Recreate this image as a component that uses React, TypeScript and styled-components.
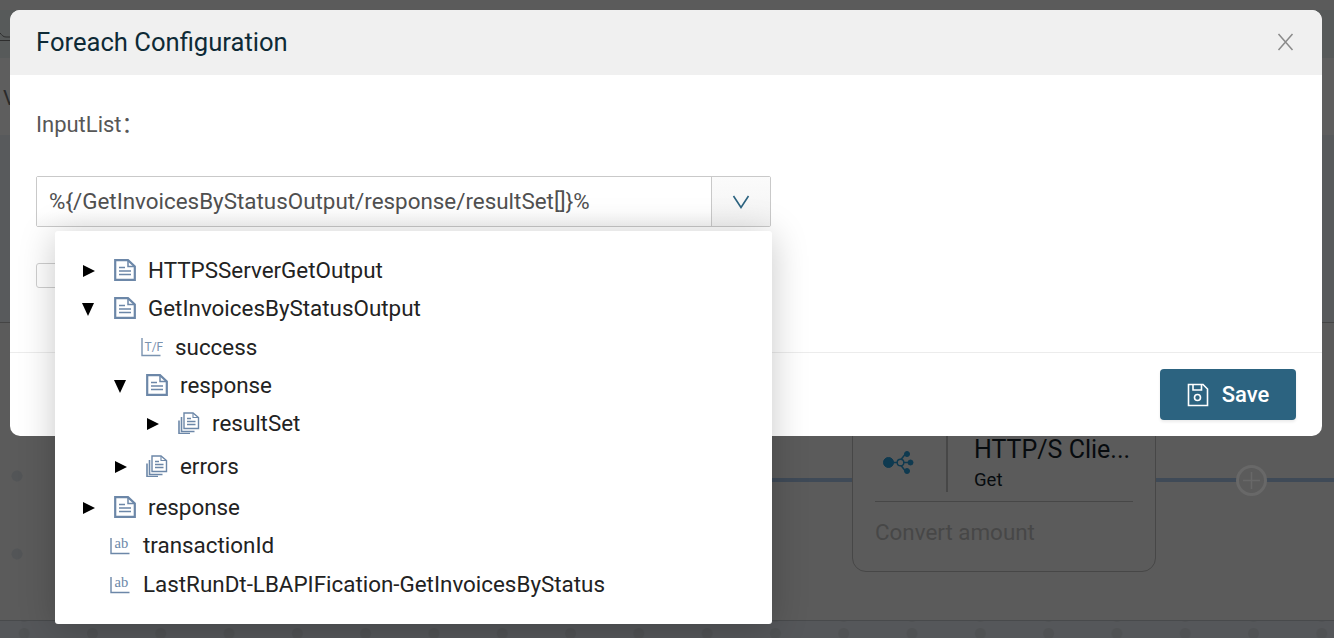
import React from 'react'
import styled, { createGlobalStyle } from 'styled-components'

const GlobalStyle = createGlobalStyle`
  html, body { margin: 0; padding: 0; background: #5b5b5b; }
  body { font-family: Roboto, "Liberation Sans", sans-serif; }
  * { box-sizing: border-box; }
`

type NodeKind = 'doc' | 'docs' | 'bool' | 'text'

interface TreeItem {
  label: string
  level: number
  kind: NodeKind
  arrow?: 'right' | 'down'
  gap?: number
}

const TREE: TreeItem[] = [
  { label: 'HTTPSServerGetOutput', level: 0, kind: 'doc', arrow: 'right' },
  { label: 'GetInvoicesByStatusOutput', level: 0, kind: 'doc', arrow: 'down' },
  { label: 'success', level: 1, kind: 'bool' },
  { label: 'response', level: 1, kind: 'doc', arrow: 'down' },
  { label: 'resultSet', level: 2, kind: 'docs', arrow: 'right' },
  { label: 'errors', level: 1, kind: 'docs', arrow: 'right', gap: 4 },
  { label: 'response', level: 0, kind: 'doc', arrow: 'right', gap: 3 },
  { label: 'transactionId', level: 0, kind: 'text' },
  { label: 'LastRunDt-LBAPIFication-GetInvoicesByStatus', level: 0, kind: 'text' },
]

const Page = styled.div`
  position: relative;
  width: 1334px;
  height: 638px;
  overflow: hidden;
  display: flex;
  flex-direction: column;
  background: #5b5b5b;
`

const TopBand = styled.div`
  position: relative;
  height: 58px;
  padding-top: 25px;
  background: linear-gradient(#5b5b5b 10px, #575a5a 10px);
  &::after {
    content: '';
    position: absolute;
    left: 0;
    top: 40px;
    width: 12px;
    border-top: 1px solid #2e2e2e;
  }
`

const SubBand = styled.div`
  height: 77px;
  padding-left: 3px;
  background: #5e5e5e;
  color: #2a2a2a;
  font-size: 21px;
  line-height: 80px;
`

const UpperCanvas = styled.div`
  height: 188px;
  background: #585a5c;
  border-bottom: 1px solid #454545;
`

const FlowCanvas = styled.div`
  position: relative;
  height: 298px;
  background: #5b5b5b;
  border-bottom: 1px solid #484a4c;
`

const DotGutter = styled.div`
  position: absolute;
  left: 0;
  top: 130px;
  width: 34px;
  height: 160px;
  background-image: radial-gradient(circle, #535557 5px, transparent 6px);
  background-size: 34px 78px;
  background-position: 0 -16px;
`

const Connector = styled.div`
  position: absolute;
  left: 300px;
  right: 0;
  top: 155px;
  height: 4px;
  background: #3f4a57;
`

const AddButton = styled.div`
  position: absolute;
  left: 1236px;
  top: 142px;
  width: 31px;
  height: 31px;
  border: 3px solid #686868;
  border-radius: 50%;
  background: #5b5b5b;
  display: flex;
  align-items: center;
  justify-content: center;
`

const FlowNode = styled.div`
  position: absolute;
  left: 852px;
  top: 77px;
  width: 304px;
  height: 172px;
  padding: 29px 22px 0;
  background: #5b5b5b;
  border: 1px solid #474747;
  border-radius: 14px;
`

const NodeHead = styled.div`
  display: flex;
  height: 62px;
`

const NodeIcon = styled.div`
  width: 73px;
  padding: 21px 0 0 8px;
  border-right: 2px solid #474747;
`

const NodeText = styled.div`
  padding-left: 26px;
  color: #070b0e;
`

const NodeTitle = styled.div`
  font-size: 25px;
  line-height: 28px;
  margin-top: 6px;
`

const NodeSub = styled.div`
  font-size: 18.5px;
  line-height: 20px;
  margin-top: 6px;
`

const NodeRule = styled.div`
  margin-top: 9px;
  border-top: 1px solid #474747;
`

const NodeNote = styled.div`
  margin-top: 16px;
  font-size: 22.4px;
  line-height: 28px;
  color: #474747;
`

const BottomStrip = styled.div`
  flex: 1;
  background-color: #55575a;
  background-image: radial-gradient(circle, #505254 5px, transparent 6px);
  background-size: 68.3px 17px;
  background-position: -10px 4px;
`

const Modal = styled.div`
  position: absolute;
  left: 10px;
  top: 10px;
  width: 1312px;
  height: 426px;
  display: flex;
  flex-direction: column;
  background: #fff;
  border-radius: 10px;
`

const ModalHeader = styled.div`
  height: 65px;
  flex: none;
  padding: 0 28px 2px 26px;
  display: flex;
  align-items: center;
  justify-content: space-between;
  background: #f0f0f0;
  border-radius: 10px 10px 0 0;
`

const ModalTitle = styled.div`
  font-size: 25.6px;
  color: #0e2a36;
`

const ModalBody = styled.div`
  position: relative;
  height: 278px;
  flex: none;
  padding: 33px 26px 0;
  border-bottom: 1px solid #ececec;
`

const FieldLabel = styled.div`
  height: 34px;
  font-size: 22px;
  line-height: 34px;
  font-family: Roboto, "Noto Sans CJK SC", sans-serif;
  color: #575757;
`

const ComboBox = styled.div`
  display: flex;
  width: 735px;
  height: 51px;
  margin-top: 34px;
  border: 1px solid #c9c9c9;
  border-radius: 2px;
`

const ComboValue = styled.div`
  flex: 1;
  padding-left: 12px;
  font-size: 22.4px;
  line-height: 48px;
  color: #505050;
  background: linear-gradient(#fff 70%, #f8f8f8);
`

const ComboToggle = styled.div`
  width: 59px;
  display: flex;
  align-items: center;
  justify-content: center;
  border-left: 1px solid #c9c9c9;
  background: linear-gradient(#fbfbfb, #f3f3f3);
`

const HiddenCheck = styled.div`
  width: 40px;
  height: 25px;
  margin-top: 36px;
  border: 1px solid #cfcfcf;
  border-radius: 3px;
`

const ModalFooter = styled.div`
  flex: 1;
  display: flex;
  justify-content: flex-end;
  padding: 16px 26px 0 0;
`

const SaveButton = styled.button`
  width: 136px;
  height: 51px;
  display: flex;
  align-items: center;
  justify-content: center;
  gap: 13px;
  border: none;
  border-radius: 4px;
  background: #2c6380;
  box-shadow: 0 2px 3px rgba(0, 0, 0, 0.08);
  color: #fff;
  font-family: inherit;
  font-size: 22px;
  font-weight: 500;
`

const Dropdown = styled.div`
  position: absolute;
  left: 55px;
  top: 231px;
  width: 717px;
  height: 393px;
  padding-top: 20px;
  background: #fff;
  border-radius: 3px;
  box-shadow: 0 4px 36px rgba(0, 0, 0, 0.22);
`

const TreeRow = styled.div<{ $level: number; $leaf: boolean; $gap: number }>`
  height: 38.3px;
  margin-top: ${p => p.$gap}px;
  padding-left: ${p => (p.$leaf ? 55 + p.$level * 31 : 28 + p.$level * 32)}px;
  display: flex;
  align-items: center;
`

const Arrow = styled.span<{ $dir: 'right' | 'down' }>`
  width: 31px;
  flex: none;
  display: flex;
  &::before {
    content: '';
    display: block;
    ${p =>
      p.$dir === 'right'
        ? 'border-left: 12px solid #000; border-top: 6.5px solid transparent; border-bottom: 6.5px solid transparent; margin-top: 2px;'
        : 'border-top: 13px solid #000; border-left: 6.5px solid transparent; border-right: 6.5px solid transparent; margin: 3px 0 0 -1px;'}
  }
`

const IconSlot = styled.span<{ $width: number }>`
  width: ${p => p.$width}px;
  flex: none;
  display: flex;
`

const RowLabel = styled.span`
  font-size: 22.4px;
  color: #222;
  white-space: nowrap;
`

const DocIcon = () => (
  <svg width="22" height="22" viewBox="0 0 22 22" fill="none" stroke="#6c87a8">
    <path d="M1.2 1.2H14L20.8 7.5V20.8H1.2Z" strokeWidth="2.2" />
    <path d="M14 1.5V7.5H20.5" strokeWidth="1.5" />
    <path d="M5 8.5H11M5 12H17M5 15.5H17" strokeWidth="1.6" />
  </svg>
)

const DocsIcon = () => (
  <svg width="22" height="22" viewBox="0 0 22 22" fill="none" stroke="#6c87a8">
    <path d="M6 1H15L20.5 5.5V16.5H6Z" strokeWidth="1.4" />
    <path d="M15 1.3V5.5H20" strokeWidth="1.1" />
    <path d="M9 6.5H13M9 9.5H17.5M9 12.5H17.5" strokeWidth="1.3" />
    <path d="M3.5 5V19.5H16.5" strokeWidth="1.6" />
    <path d="M1 8.5V21.5H12" strokeWidth="1.6" />
  </svg>
)

const BoolIcon = () => (
  <svg width="22" height="20" viewBox="0 0 22 20" fill="none">
    <path d="M1 1V18.5H19.5" stroke="#7a93b0" strokeWidth="1.4" />
    <text x="3.5" y="14" fontFamily="Roboto, sans-serif" fontSize="12" fill="#7a93b0">T/F</text>
  </svg>
)

const TextIcon = () => (
  <svg width="20" height="20" viewBox="0 0 20 20" fill="none">
    <path d="M1 3V18.5H19.5" stroke="#6c87a8" strokeWidth="1.4" />
    <text x="4.5" y="13" fontFamily="'Liberation Serif', serif" fontSize="14.5" fill="#6c87a8">ab</text>
  </svg>
)

const ICONS: Record<NodeKind, React.FC> = { doc: DocIcon, docs: DocsIcon, bool: BoolIcon, text: TextIcon }

const iconWidth = (item: TreeItem) => (item.arrow ? 34 : item.level > 0 ? 34 : 33)

const App: React.FC = () => {
  return (
    <Page>
      <GlobalStyle />
      <TopBand>
        <svg width="12" height="8" viewBox="0 0 12 8" fill="none" stroke="#2e2e2e">
          <path d="M0 1C2 3 3 5 6 5H12" />
        </svg>
      </TopBand>
      <SubBand>V</SubBand>
      <UpperCanvas />
      <FlowCanvas>
        <DotGutter />
        <Connector />
        <AddButton>
          <svg width="19" height="19" viewBox="0 0 19 19" stroke="#686868" strokeWidth="1.5">
            <path d="M9.5 1V18M1 9.5H18" />
          </svg>
        </AddButton>
        <FlowNode>
          <NodeHead>
            <NodeIcon>
              <svg width="31" height="23" viewBox="0 0 31 23" fill="#0f3a50" stroke="#0f3a50">
                <circle cx="5.5" cy="11.5" r="5" />
                <path d="M10 11.5H14.5M20 11.5H27M22 3.5L18 8.5M22 19.5L18 14.5" fill="none" strokeWidth="1.5" />
                <circle cx="17.5" cy="11.5" r="3.3" fill="none" strokeWidth="1.4" />
                <circle cx="24" cy="3" r="2.5" />
                <circle cx="27.5" cy="11.5" r="2.5" />
                <circle cx="24" cy="20" r="2.5" />
              </svg>
            </NodeIcon>
            <NodeText>
              <NodeTitle>HTTP/S Clie...</NodeTitle>
              <NodeSub>Get</NodeSub>
            </NodeText>
          </NodeHead>
          <NodeRule />
          <NodeNote>Convert amount</NodeNote>
        </FlowNode>
      </FlowCanvas>
      <BottomStrip />

      <Modal>
        <ModalHeader>
          <ModalTitle>Foreach Configuration</ModalTitle>
          <svg width="17" height="18" viewBox="0 0 17 18" stroke="#8a8a8a" strokeWidth="1.5">
            <path d="M1.5 1L15.5 17M15.5 1L1.5 17" />
          </svg>
        </ModalHeader>
        <ModalBody>
          <FieldLabel>InputList：</FieldLabel>
          <ComboBox>
            <ComboValue>{'%{/GetInvoicesByStatusOutput/response/resultSet[]}%'}</ComboValue>
            <ComboToggle>
              <svg width="18" height="14" viewBox="0 0 18 14" fill="none" stroke="#2c6380" strokeWidth="1.6">
                <path d="M1.5 1L9 12.5L16.5 1" />
              </svg>
            </ComboToggle>
          </ComboBox>
          <HiddenCheck />
        </ModalBody>
        <ModalFooter>
          <SaveButton>
            <svg width="22" height="24" viewBox="0 0 22 24" fill="none" stroke="#fff" strokeWidth="1.6">
              <path d="M1.5 1.5H16L20.5 6V22.5H1.5Z" />
              <path d="M6 1.5V7H14.5V1.5" />
              <circle cx="10.5" cy="14.5" r="3" />
            </svg>
            Save
          </SaveButton>
        </ModalFooter>
      </Modal>

      <Dropdown>
        {TREE.map(item => {
          const Icon = ICONS[item.kind]
          return (
            <TreeRow key={item.label + item.level} $level={item.level} $leaf={!item.arrow} $gap={item.gap ?? 0}>
              {item.arrow && <Arrow $dir={item.arrow} />}
              <IconSlot $width={iconWidth(item)}>
                <Icon />
              </IconSlot>
              <RowLabel>{item.label}</RowLabel>
            </TreeRow>
          )
        })}
      </Dropdown>
    </Page>
  )
}

export default App
